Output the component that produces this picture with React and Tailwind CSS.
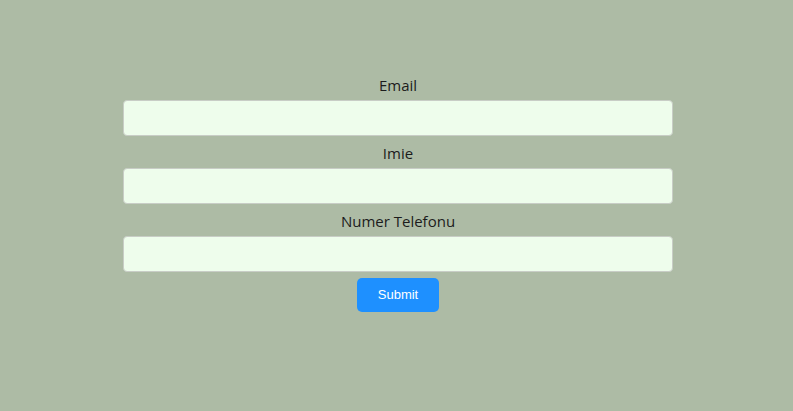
import { useState } from 'react';

const fields = [
  { name: 'email', label: 'Email', type: 'email' },
  { name: 'imie', label: 'Imie', type: 'text' },
  { name: 'telefon', label: 'Numer Telefonu', type: 'tel' },
];

const App = () => {
  const [values, setValues] = useState({ email: '', imie: '', telefon: '' });

  return (
    <div className="min-h-[411px] w-full bg-[#adbba5] pt-[72px] pl-[3px]">
      <form
        onSubmit={(e) => e.preventDefault()}
        className="mx-auto flex w-[550px] flex-col items-center"
      >
        {fields.map((f) => (
          <div key={f.name} className="flex w-full flex-col items-center">
            <label
              htmlFor={f.name}
              className="mb-[2px] block h-[26px] text-[15px] leading-[27px] text-[#1c1c1c] [font-family:'Open_Sans',sans-serif]"
            >
              {f.label}
            </label>
            <input
              id={f.name}
              type={f.type}
              value={values[f.name]}
              onChange={(e) => setValues({ ...values, [f.name]: e.target.value })}
              className="mb-1 h-9 w-full rounded-[4px] border border-[#c8cdc6] bg-[#eefdec] px-2 outline-none"
            />
          </div>
        ))}
        <button
          type="submit"
          className="mt-[2px] h-[34px] w-[82px] rounded-[5px] bg-[#1e90ff] text-[13px] font-medium text-white [font-family:'Liberation_Sans',Arial,sans-serif]"
        >
          Submit
        </button>
      </form>
    </div>
  );
};

export default App;
